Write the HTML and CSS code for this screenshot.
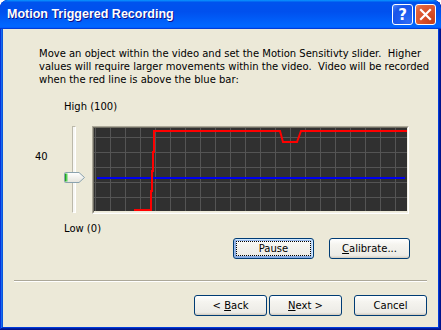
FILE: index.html
```html
<!DOCTYPE html>
<html>
<head>
<meta charset="utf-8">
<link rel="stylesheet" href="styles.css">
</head>
<body>
<div class="window">
  <div class="titlebar">
    <span class="title">Motion Triggered Recording</span>
    <div class="tb-buttons">
      <div class="tb-btn help">?</div>
      <div class="tb-btn close">
        <svg width="21" height="21" viewBox="0 0 21 21"><path d="M6 6 L15 15 M15 6 L6 15" stroke="#fff" stroke-width="2.2" stroke-linecap="square"/></svg>
      </div>
    </div>
  </div>
  <div class="body">
    <p class="intro">Move an object within the video and set the Motion Sensitivty slider.&nbsp; Higher<br>values will require larger movements within the video.&nbsp; Video will be recorded<br>when the red line is above the blue bar:</p>
    <div class="monitor">
      <div class="scale-label high">High (100)</div>
      <div class="value">40</div>
      <div class="slider">
        <div class="track"></div>
        <svg class="thumb" width="21" height="11" viewBox="0 0 21 11">
          <defs>
            <linearGradient id="tg" x1="0" y1="0" x2="0" y2="1">
              <stop offset="0" stop-color="#ffffff"/>
              <stop offset="1" stop-color="#e4e3dc"/>
            </linearGradient>
          </defs>
          <path d="M1.5 0.5 H15 L20.5 5.5 L15 10.5 H1.5 Q0.5 10.5 0.5 9.5 V1.5 Q0.5 0.5 1.5 0.5 Z" fill="url(#tg)" stroke="#8aa2ae"/>
          <rect x="1" y="1.5" width="1" height="8" fill="#21a121"/>
          <rect x="2" y="1.5" width="1.5" height="8" fill="#5ad15a"/>
        </svg>
      </div>
      <div class="chart">
        <div class="chart-inner">
          <svg width="313" height="83" viewBox="0 0 313 83">
            <rect width="313" height="83" fill="#303030"/>
            <g stroke="#545454" stroke-width="1">
              <path d="M1.5 0V83 M16.5 0V83 M31.5 0V83 M46.5 0V83 M61.5 0V83 M76.5 0V83 M91.5 0V83 M106.5 0V83 M121.5 0V83 M136.5 0V83 M151.5 0V83 M166.5 0V83 M181.5 0V83 M196.5 0V83 M211.5 0V83 M226.5 0V83 M241.5 0V83 M256.5 0V83 M271.5 0V83 M286.5 0V83 M301.5 0V83"/>
              <path d="M0 9.5H313 M0 24.5H313 M0 39.5H313 M0 54.5H313 M0 69.5H313"/>
            </g>
            <line x1="3" y1="50" x2="311" y2="50" stroke="#0000ee" stroke-width="2"/>
            <polyline points="40,82 57,82 57,63 58,63 58,43 59,43 59,24 60,24 60,3 186,3 189,14 203,14 207,3 313,3" fill="none" stroke="#ff0000" stroke-width="2"/>
          </svg>
        </div>
      </div>
      <div class="scale-label low">Low (0)</div>
    </div>
    <div class="actions">
      <button class="btn wide default">Pause</button>
      <button class="btn wide"><u>C</u>alibrate...</button>
    </div>
    <div class="separator"></div>
    <div class="nav">
      <button class="btn">&lt; <u>B</u>ack</button>
      <button class="btn"><u>N</u>ext &gt;</button>
      <button class="btn cancel">Cancel</button>
    </div>
  </div>
</div>
</body>
</html>
```
FILE: styles.css
```css
* { box-sizing: border-box; }
html, body { margin: 0; padding: 0; background: #ffffff; }
body { font-family: "DejaVu Sans", Verdana, sans-serif; font-size: 10px; color: #000; }

.window {
  width: 441px;
  height: 330px;
  display: flex;
  flex-direction: column;
  background: #ece9d8;
  border-radius: 8px 8px 0 0;
  overflow: hidden;
  padding: 0 3px 3px;
  box-shadow: inset -1px -1px #00138c, inset 1px 1px #0831d9, inset -2px -2px #001ea0, inset 2px 2px #166aee, inset -3px -3px #003bda, inset 3px 3px #0855dd;
}

.titlebar {
  margin: 0 -3px;
  height: 29px;
  flex: none;
  display: flex;
  align-items: center;
  justify-content: space-between;
  padding: 0 5px 0 7px;
  background: linear-gradient(180deg, #0997ff, #0053ee 8%, #0050ee 40%, #0066ff 88%, #0066ff 93%, #005bff 95%, #003dd7 96%, #003dd7);
  border-radius: 8px 8px 0 0;
}
.title {
  color: #fff;
  font-family: "Liberation Sans", Arial, sans-serif;
  font-weight: bold;
  font-size: 12.5px;
  text-shadow: 1px 1px #0f1089;
  padding-bottom: 1px;
}
.tb-buttons { display: flex; gap: 2px; }
.tb-btn {
  width: 21px;
  height: 21px;
  border: 1px solid #fff;
  border-radius: 3px;
  display: flex;
  align-items: center;
  justify-content: center;
}
.tb-btn.help {
  background: radial-gradient(circle at 80% 85%, #2f6bf4 0, #1d5df0 40%, #1a54e8 70%, #4f8af8 100%);
  color: #fff;
  font-family: "DejaVu Sans", sans-serif;
  font-weight: bold;
  font-size: 15px;
}
.tb-btn.close {
  background: radial-gradient(circle at 85% 85%, #c7401a 0, #d9502a 45%, #e2643c 80%, #ee8a66 100%);
}
.tb-btn.close svg { display: block; margin: -1px; }

.body { flex: 1; display: flex; flex-direction: column; }

.intro {
  margin: 18px 0 0 36px;
  line-height: 13px;
  white-space: nowrap;
}

.monitor {
  margin-top: 14px;
  display: grid;
  grid-template-columns: 61px 28px 317px;
}
.scale-label { grid-column: 2 / 4; line-height: 13px; }
.scale-label.high { grid-row: 1; }
.scale-label.low { grid-row: 3; margin-top: 8px; }
.value {
  grid-row: 2; grid-column: 1;
  line-height: 13px;
  margin-top: 37px;
  padding-left: 32px;
}
.slider {
  grid-row: 2; grid-column: 2;
  position: relative;
  margin-top: 13px;
  height: 88px;
}
.track {
  margin-left: 8px;
  width: 4px;
  height: 87px;
  background: #f7f7f4;
  border-left: 1px solid #bcb9aa;
  border-top: 1px solid #bcb9aa;
  border-right: 1px solid #fff;
  border-bottom: 1px solid #fff;
}
.thumb { position: absolute; left: 0; top: 46px; display: block; }
.chart {
  grid-row: 2; grid-column: 3;
  margin-top: 13px;
  width: 317px;
  height: 88px;
  border: 1px solid;
  border-color: #aca899 #fff #fff #aca899;
}
.chart-inner {
  border: 1px solid;
  border-color: #716f64 #f1efe2 #f1efe2 #716f64;
  height: 86px;
}
.chart-inner svg { display: block; }

.btn {
  height: 21px;
  width: 73px;
  padding: 0;
  border: 1px solid #003c74;
  border-radius: 3px;
  background: linear-gradient(180deg, #ffffff, #f5f4ef 30%, #ecebe6 86%, #d6d0c5);
  font-family: "DejaVu Sans", Verdana, sans-serif;
  font-size: 10px;
  color: #000;
  box-shadow: inset 0 -1px #d6d0c5;
}
.btn.wide { width: 81px; }
.btn.default {
  box-shadow: inset -1px 1px #cee7ff, inset 1px 2px #98b8ea, inset -2px 2px #bcd4f6, inset 1px -1px #89ade4, inset 2px -2px #89ade4;
  outline: 1px dotted #000;
  outline-offset: -4px;
}
.actions {
  margin-top: 3px;
  display: flex;
  justify-content: flex-end;
  gap: 15px;
  padding-right: 28px;
}
.separator {
  margin: 21px 11px 0 11px;
  height: 2px;
  border-top: 1px solid #aca899;
  border-bottom: 1px solid #fff;
}
.nav {
  margin-top: 13px;
  display: flex;
  justify-content: flex-end;
  gap: 2px;
  padding-right: 11px;
}
.btn.cancel { margin-left: 10px; }
```
